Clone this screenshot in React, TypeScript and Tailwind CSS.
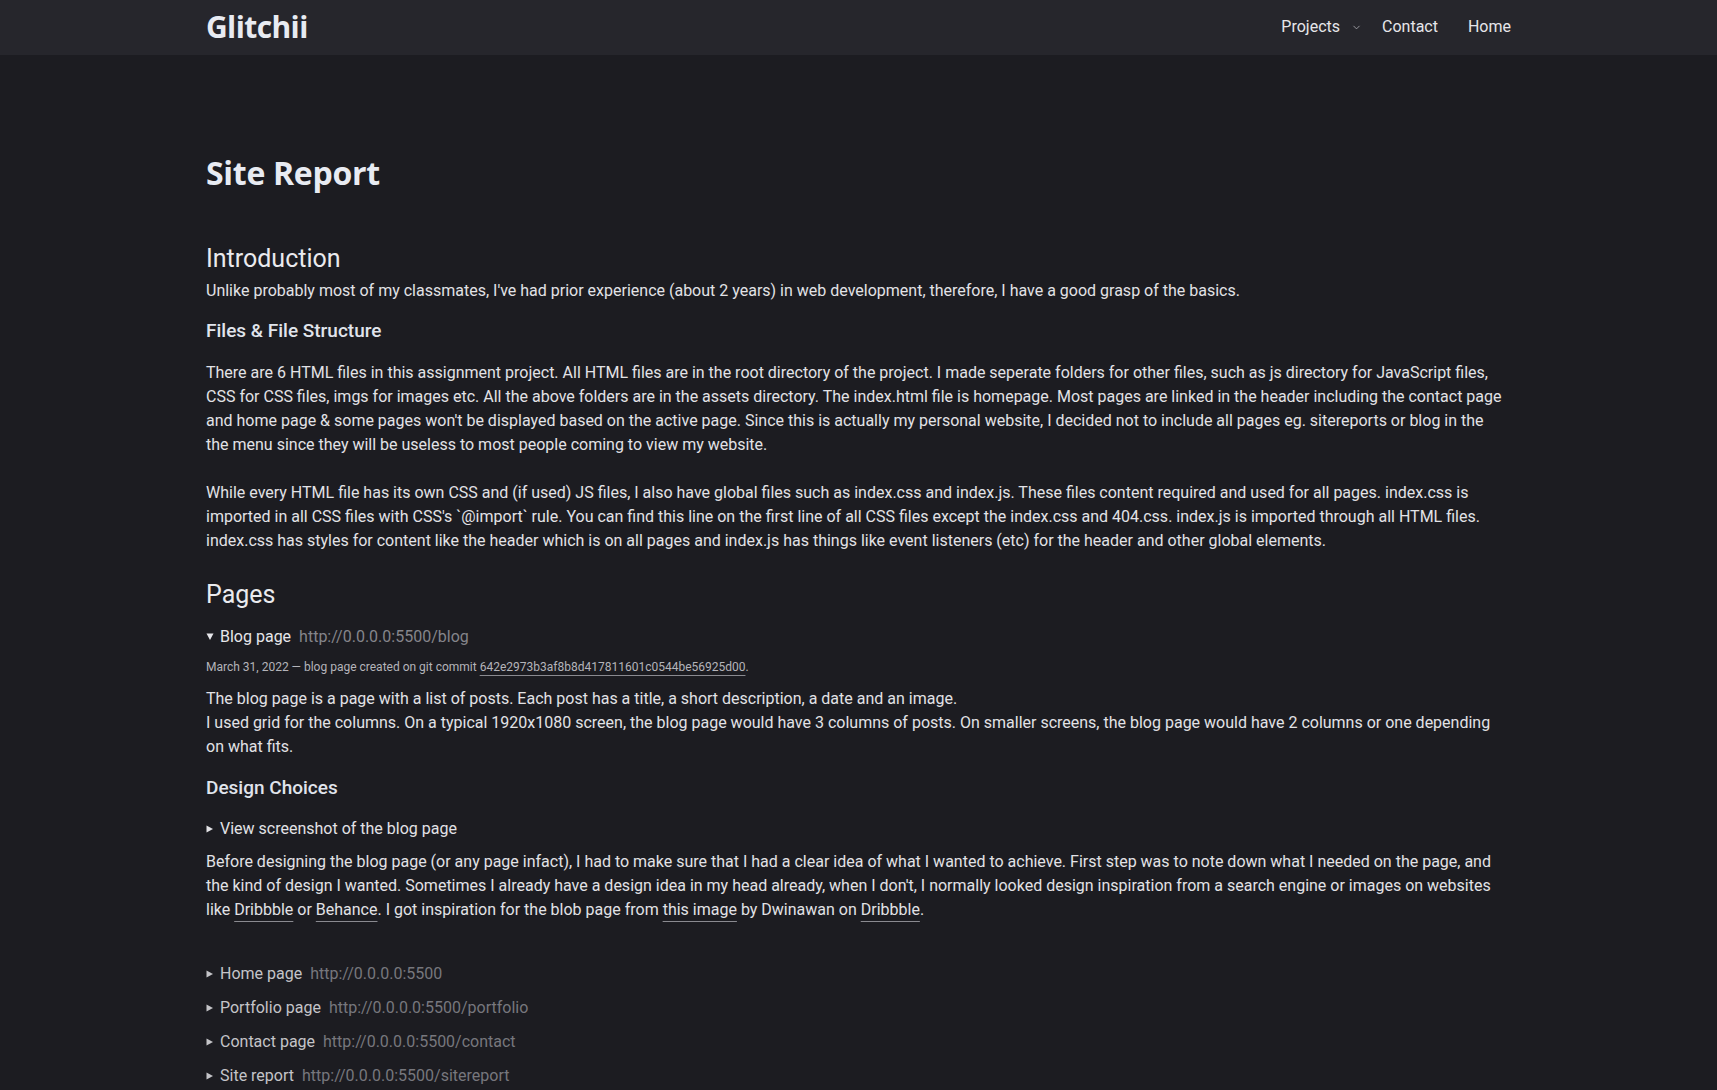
import { ChevronDown } from 'lucide-react';

const pages = [
  { name: 'Home page', url: 'http://0.0.0.0:5500' },
  { name: 'Portfolio page', url: 'http://0.0.0.0:5500/portfolio' },
  { name: 'Contact page', url: 'http://0.0.0.0:5500/contact' },
  { name: 'Site report', url: 'http://0.0.0.0:5500/sitereport' },
];

function Link({ children }: { children: React.ReactNode }) {
  return (
    <a className="underline decoration-[#8a8a90] underline-offset-[6px] decoration-1 cursor-pointer">
      {children}
    </a>
  );
}

function Marker({ open }: { open?: boolean }) {
  return open ? (
    <svg width="8" height="8" viewBox="0 0 8 8" className="inline-block mr-[6px] mb-[2px]">
      <path d="M0.5 0.5 L7.5 0.5 L4 7 Z" fill="currentColor" />
    </svg>
  ) : (
    <svg width="8" height="8" viewBox="0 0 8 8" className="inline-block mr-[6px] mb-[2px]">
      <path d="M0.5 0.5 L7 4 L0.5 7.5 Z" fill="currentColor" />
    </svg>
  );
}

export default function App() {
  return (
    <div className="min-h-screen bg-[#1c1c21] text-[#e2e2e6] font-['Roboto',sans-serif] text-[16px] leading-[24px]">
      {/* Header */}
      <header className="h-[55px] bg-[#26262c]">
        <div className="w-[1305px] mx-auto h-full flex items-center justify-between">
          <h1 className="font-['Open_Sans',sans-serif] font-bold text-[30px] text-[#e8ebf2] tracking-[-0.6px] pb-[1px]">
            Glitchii
          </h1>
          <nav className="flex items-center text-[16px] text-[#e6e6ea] pb-[1px]">
            <span>Projects</span>
            <ChevronDown className="ml-[11px] w-[11px] h-[11px] text-[#b0b0b6]" strokeWidth={1.75} />
            <span className="ml-[20px]">Contact</span>
            <span className="ml-[30px]">Home</span>
          </nav>
        </div>
      </header>

      {/* Main */}
      <main className="w-[1305px] mx-auto pt-[99px] pb-[40px] pr-[6px]">
        <h2 className="font-['Open_Sans',sans-serif] font-bold text-[32px] leading-[38px] text-[#e8ebf2] tracking-[-0.3px]">
          Site Report
        </h2>

        <h3 className="mt-[51px] text-[25px] leading-[32px] text-[#eaeaee]">Introduction</h3>
        <p className="mt-[4px]">
          Unlike probably most of my classmates, I've had prior experience (about 2 years) in web development, therefore, I have a good grasp of the basics.
        </p>

        <h4 className="mt-[14px] text-[19px] leading-[28px] font-medium text-[#e0e4ec]">Files &amp; File Structure</h4>
        <p className="mt-[16px]">
          There are 6 HTML files in this assignment project. All HTML files are in the root directory of the project. I made seperate folders for other files, such as js directory for JavaScript files, CSS for CSS files, imgs for images etc. All the above folders are in the assets directory. The index.html file is homepage. Most pages are linked in the header including the contact page and home page &amp; some pages won't be displayed based on the active page. Since this is actually my personal website, I decided not to include all pages eg. sitereports or blog in the the menu since they will be useless to most people coming to view my website.
        </p>
        <p className="mt-[24px]">
          While every HTML file has its own CSS and (if used) JS files, I also have global files such as index.css and index.js. These files content required and used for all pages. index.css is imported in all CSS files with CSS's `@import` rule. You can find this line on the first line of all CSS files except the index.css and 404.css. index.js is imported through all HTML files. index.css has styles for content like the header which is on all pages and index.js has things like event listeners (etc) for the header and other global elements.
        </p>

        <h3 className="mt-[26px] text-[25px] leading-[32px] text-[#eaeaee]">Pages</h3>

        <details open className="mt-[14px]">
          <summary className="list-none [&::-webkit-details-marker]:hidden cursor-pointer text-[#e6e6ea]">
            <Marker open />
            Blog page<span className="ml-[8px] text-[#85858b]">http://0.0.0.0:5500/blog</span>
          </summary>
          <p className="mt-[8px] text-[12px] leading-[20px] text-[#b4b4ba]">
            March 31, 2022 — blog page created on git commit{' '}
            <a className="underline decoration-[#8a8a90] underline-offset-[4px] text-[#b4b4ba]">642e2973b3af8b8d417811601c0544be56925d00</a>.
          </p>
          <p className="mt-[10px]">
            The blog page is a page with a list of posts. Each post has a title, a short description, a date and an image.
            <br />
            I used grid for the columns. On a typical 1920x1080 screen, the blog page would have 3 columns of posts. On smaller screens, the blog page would have 2 columns or one depending on what fits.
          </p>
          <h4 className="mt-[15px] text-[19px] leading-[28px] font-medium text-[#e0e4ec]">Design Choices</h4>
          <details className="mt-[15px]">
            <summary className="list-none [&::-webkit-details-marker]:hidden cursor-pointer">
              <Marker />
              View screenshot of the blog page
            </summary>
          </details>
          <p className="mt-[9px]">
            Before designing the blog page (or any page infact), I had to make sure that I had a clear idea of what I wanted to achieve. First step was to note down what I needed on the page, and the kind of design I wanted. Sometimes I already have a design idea in my head already, when I don't, I normally looked design inspiration from a search engine or images on websites like <Link>Dribbble</Link> or <Link>Behance</Link>. I got inspiration for the blob page from <Link>this image</Link> by Dwinawan on <Link>Dribbble</Link>.
          </p>
        </details>

        <div className="mt-[40px] flex flex-col gap-[10px]">
          {pages.map((p) => (
            <details key={p.name}>
              <summary className="list-none [&::-webkit-details-marker]:hidden cursor-pointer text-[#c4c4c8]">
                <Marker />
                {p.name}
                <span className="ml-[8px] text-[#77777d]">{p.url}</span>
              </summary>
            </details>
          ))}
        </div>
      </main>
    </div>
  );
}
